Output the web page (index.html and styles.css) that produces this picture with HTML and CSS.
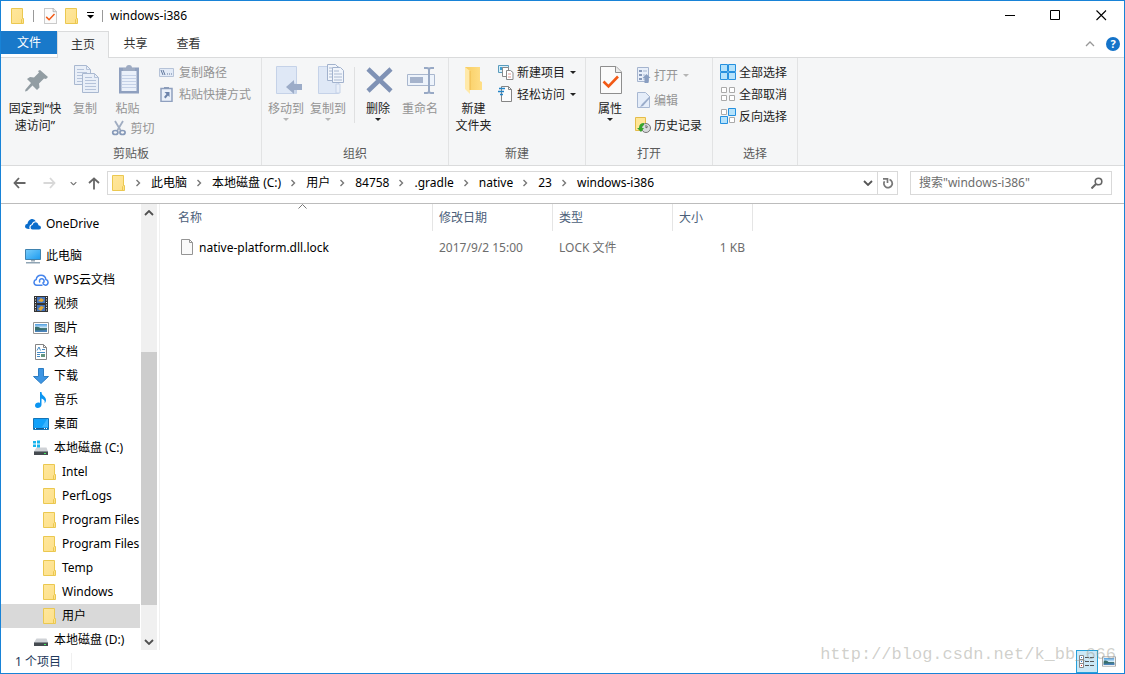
FILE: index.html
```html
<!DOCTYPE html>
<html lang="zh-CN">
<head>
<meta charset="utf-8">
<title>windows-i386</title>
<link rel="stylesheet" href="styles.css">
</head>
<body>
<svg class="defs" aria-hidden="true">
  <linearGradient id="gold" x2="1" y2="1"><stop stop-color="#ffe79c"/><stop offset="1" stop-color="#fde08a"/></linearGradient>
  <linearGradient id="fold" x2="1"><stop stop-color="#f8cd62"/><stop offset="1" stop-color="#ffdf88"/></linearGradient>
  <linearGradient id="screen" x2="1" y2="1"><stop stop-color="#79cdfb"/><stop offset="1" stop-color="#1b9af0"/></linearGradient>
  <linearGradient id="sky" y2="1" x2="0"><stop stop-color="#4d9de0"/><stop offset=".5" stop-color="#d6ecf8"/><stop offset=".55" stop-color="#4a7a74"/><stop offset="1" stop-color="#3b6fa5"/></linearGradient>
  <symbol id="folder" viewBox="0 0 14 16"><path d="M.5.5h11v10h1v5H.5z" fill="url(#gold)" stroke="#ebc850"/><path d="M11.500 10.500l-1 1v4" fill="none" stroke="#ebc850"/></symbol>
  <symbol id="page" viewBox="0 0 12 16"><path d="M.5.5h8l3 3v12H.5z" fill="#fafafa" stroke="#949494"/><path d="M8.500.5v3h3" fill="none" stroke="#949494"/></symbol>
  <symbol id="props" viewBox="0 0 22 28"><path d="M.5.5h15.500l5.500 5.500v21.500H.5z" fill="#fbfbfb" stroke="#8e8e8e"/><path d="M15.500.5v6h6" fill="#ececec" stroke="#8e8e8e"/><path d="M3.500 15.500l5 5L18 10.500" fill="none" stroke="#f25a16" stroke-width="2.600"/></symbol>
  <symbol id="picture" viewBox="0 0 16 12"><path d="M.5.5h15v11H.5z" fill="#fff" stroke="#969696"/><path d="M2 2h12v8H2z" fill="url(#sky)"/><path d="M2 5q4-1 6 2l6 1v1H2z" fill="#386e6c"/><path d="M2 8.500l12-.5v2H2z" fill="#4a83ba"/></symbol>
  <symbol id="chev" viewBox="0 0 6 8"><path d="M1.500 1l3 3-3 3" fill="none" stroke="#777" stroke-width="1.400"/></symbol>
  <symbol id="down" viewBox="0 0 10 6"><path d="M1 1l4 4 4-4" fill="none" stroke="currentColor" stroke-width="1.800"/></symbol>
  <symbol id="tri" viewBox="0 0 6 3"><path d="M0 0h6L3 3z" fill="currentColor"/></symbol>
  <symbol id="disk" viewBox="0 0 16 14"><path d="M3.500 5.500h10l1.500 4H1z" fill="#cfd2d6"/><path d="M1 9h14v4H1z" fill="#454b50"/><path d="M1 9h14v1H1z" fill="#858a90"/><path d="M11 11h2v1h-2z" fill="#44f060"/></symbol>
</svg>

<div class="window">
  <header class="titlebar">
    <div class="quick">
      <svg width="14" height="16"><use href="#folder"/></svg>
      <span class="bar"></span>
      <button aria-label="属性"><svg width="13" height="16" viewBox="0 0 22 28"><use href="#props"/></svg></button>
      <button aria-label="新建文件夹"><svg width="14" height="16"><use href="#folder"/></svg></button>
      <button aria-label="自定义快速访问工具栏"><svg width="7" height="7" viewBox="0 0 7 7"><path d="M0 0h7v1H0zM0 3h7L3.500 6.500z"/></svg></button>
      <span class="bar"></span>
    </div>
    <h1>windows-i386</h1>
    <div class="caption">
      <button aria-label="最小化"><svg width="11" height="11" viewBox="0 0 11 11"><path d="M1 5.500h10" stroke="#000"/></svg></button>
      <button aria-label="最大化"><svg width="11" height="11" viewBox="0 0 11 11"><path d="M.5.5h9v9h-9z" fill="none" stroke="#000"/></svg></button>
      <button aria-label="关闭"><svg width="11" height="11" viewBox="0 0 11 11"><path d="M.5.5l9.500 9.500M10 .5L.5 10" stroke="#000" stroke-width="1.100"/></svg></button>
    </div>
  </header>

  <nav class="tabs">
    <button class="tab file">文件</button>
    <button class="tab active">主页</button>
    <button class="tab">共享</button>
    <button class="tab">查看</button>
    <div class="tab-tools">
      <button aria-label="最小化功能区"><svg width="10" height="6" viewBox="0 0 10 6"><path d="M1 5l4-4 4 4" fill="none" stroke="#989898" stroke-width="1.300"/></svg></button>
      <button class="help" aria-label="帮助">?</button>
    </div>
  </nav>

  <section class="ribbon">
    <div class="group clipboard">
      <div class="tools">
        <button class="big pin"><svg width="32" height="32" viewBox="-1 -1 32 32"><path d="M20 5l8 7-2 2-2-.5-5 5 .5 4-2.500 2.500-4.500-4.500L7 26l-2 .5.5-2L11 18l-4-4 3-2 4 .5 5-5L18 6z" fill="#929da3"/></svg><span>固定到“快<br>速访问”</span></button>
        <button class="big copy off"><svg width="32" height="32" viewBox="-1 0 32 32"><g fill="#e9eff8" stroke="#a9b8d0"><path d="M4.500 1.500h12l4 4v15h-16z"/><path d="M12.500 9.500h12l4 4v15h-16z"/></g><path d="M16.500 1.500v4h4M24.500 9.500v4h4M7 5.500h7m-7 3h10m-10 3h5m-5 3h5m-5 3h5m3-4h7m-7 3h11m-11 3h11m-11 3h11m-11 3h11" fill="none" stroke="#b5c3da"/></svg><span>复制</span></button>
        <div class="paste">
          <button class="big off"><svg width="32" height="32" viewBox="-1 0 32 32"><path d="M6 3.500h20v26H6z" fill="#8fa0bf"/><path d="M8.500 7h15v20h-15z" fill="#eaf0fa"/><path d="M10 4h3q0-3 3-3t3 3h3v3H10z" fill="#9eabc2"/><path d="M9 11.500h14m-14 3h14m-14 3h14m-14 3h14m-14 3h14" stroke="#c5d1e7"/></svg><span>粘贴</span></button>
          <button class="small off"><svg width="16" height="16" viewBox="0 0 16 16"><path d="M4 1l6 10M12 1L6 11" stroke="#a0adc2" stroke-width="1.800"/><ellipse cx="4.300" cy="12.500" rx="2.600" ry="2" fill="none" stroke="#879ab9" stroke-width="1.700"/><ellipse cx="11.500" cy="12.500" rx="2.600" ry="2" fill="none" stroke="#879ab9" stroke-width="1.700"/></svg>剪切</button>
        </div>
        <div class="stack">
          <button class="small off"><svg width="16" height="16" viewBox="0 0 16 16"><path d="M.5 4.500h14v8H.5z" fill="#e3ebf7" stroke="#b6c3d8"/><path d="M2 6l2 5m0-5l2 5m2-1h1m1 0h1m1 0h1" stroke="#62789d"/></svg>复制路径</button>
          <button class="small off"><svg width="16" height="16" viewBox="0 0 16 16"><path d="M2 2.500h11v13H2z" fill="#eaf0fa" stroke="#8fa0bf" stroke-width="1.500"/><path d="M5 1h5v2H5z" fill="#8b9cb9"/><path d="M5.500 6h5v5L9 9.500 6.500 12.500 5 11l2.500-3z" fill="#6c83ab"/></svg>粘贴快捷方式</button>
        </div>
      </div>
      <h2>剪贴板</h2>
    </div>

    <div class="group organize">
      <div class="tools">
        <button class="big off"><svg width="32" height="32" viewBox="-2 0 32 32"><path d="M4.500 2.500h20v27h-20z" fill="#dfe8f6" stroke="#c5d2e8"/><path d="M21 17l3 3v10h-3z" fill="#c9d6ea"/><path d="M14 23l8-7v4h8v6h-8v4z" fill="#9cacc8"/></svg><span>移动到</span><svg class="tri" width="6" height="3"><use href="#tri"/></svg></button>
        <button class="big off"><svg width="32" height="32" viewBox="-2 0 32 32"><path d="M4.500 2.500h20v27h-20z" fill="#dfe8f6" stroke="#c5d2e8"/><path d="M22 20h4v9h-4z" fill="#e9eff9" stroke="#c5d2e8"/><g fill="#f1f5fb" stroke="#a2b2cd"><path d="M13.500.5h8l3 3v13h-11z"/><path d="M18.500 3.500h8l3 3v12h-11z"/></g><path d="M15 4h3m-3 3h3m-3 3h3m-3 3h3m2-6h5m-5 3h8m-8 3h8m-8 3h8" stroke="#aab9d1"/></svg><span>复制到</span><svg class="tri" width="6" height="3"><use href="#tri"/></svg></button>
        <span class="divider"></span>
        <button class="big"><svg width="32" height="32" viewBox="-1 0 32 32"><path d="M5 5l23 22M28 5L5 27" stroke="#7f92b5" stroke-width="4.500"/></svg><span>删除</span><svg class="tri" width="6" height="3"><use href="#tri"/></svg></button>
        <button class="big off"><svg width="32" height="32" viewBox="-1 0 32 32"><path d="M2.500 10.500h27v11h-27z" fill="#edf3fb" stroke="#a9b7ce"/><path d="M5 13h13v6H5z" fill="#a5b3cc"/><path d="M19 4h3q2 0 2 2 0-2 2-2h3M24 5v22m-5 2h3q2 0 2-2 0 2 2 2h3" fill="none" stroke="#98a9c5" stroke-width="2"/></svg><span>重命名</span></button>
      </div>
      <h2>组织</h2>
    </div>

    <div class="group new">
      <div class="tools">
        <button class="big"><svg width="32" height="32" viewBox="0 0 32 32"><path d="M7 3h15v14l2 1v8H11z" fill="url(#fold)"/><path d="M7 3l5 4v23l-5-5z" fill="#ffe9a9"/><path d="M12 7v19" stroke="#edb94c"/></svg><span>新建<br>文件夹</span></button>
        <div class="stack">
          <button class="small"><svg width="16" height="16" viewBox="0 0 16 16"><path d="M.5 1.500h10v7H.5z" fill="#d8effa" stroke="#5a9cbd"/><path d="M2 3h5v3H2z" fill="#3da0d3"/><g fill="#fff" stroke="#898989"><path d="M4.500 3.500h6v9h-6z"/><path d="M8.500 6.500h4l2.500 2v7h-6.500z"/></g><path d="M10 10h3m-3 3h3" stroke="#e2988f"/></svg>新建项目<svg class="tri" width="6" height="3"><use href="#tri"/></svg></button>
          <button class="small"><svg width="16" height="16" viewBox="0 0 16 16"><path d="M3.500.5h7l3 3v12h-10z" fill="#fcfcfc" stroke="#858585"/><path d="M10.500.5v3h3" fill="none" stroke="#858585"/><path d="M1 2.500h6M0 5.500h6M2 8.500h3" stroke="#2384c7" stroke-width="1.300"/></svg>轻松访问<svg class="tri" width="6" height="3"><use href="#tri"/></svg></button>
        </div>
      </div>
      <h2>新建</h2>
    </div>

    <div class="group open">
      <div class="tools">
        <button class="big"><svg width="32" height="32" viewBox="0 0 32 32"><svg x="6" y="2" width="22" height="28"><use href="#props"/></svg></svg><span>属性</span><svg class="tri" width="6" height="3"><use href="#tri"/></svg></button>
        <div class="stack roomy">
          <button class="small off"><svg width="16" height="16" viewBox="-1 0 16 16"><path d="M1.500.5h11v14h-11z" fill="#e8effa" stroke="#a5b4ce"/><path d="M3 3h3v2H3zm0 4h3v2H3zm0 4h3v2H3z" fill="#8799b9"/><path d="M7 4h4M7 8h2M7 12h2" stroke="#a9b8d1"/><path d="M10.500 7l4 4h-2v5h-4v-5h-2z" fill="#899ec1"/></svg>打开<svg class="tri" width="6" height="3"><use href="#tri"/></svg></button>
          <button class="small off"><svg width="16" height="16" viewBox="-1 0 16 16"><path d="M1.500.5h8l4 4v11h-12z" fill="#e5edf9" stroke="#a8b8d2"/><path d="M14 4l-8 8-2 3 3-1 7-8z" fill="#9aacca"/></svg>编辑</button>
          <button class="small"><svg width="16" height="16" viewBox="0 0 16 16"><path d="M.5.5h10v13H.5z" fill="#ffe697" stroke="#e4bc4b"/><circle cx="11" cy="11" r="4.500" fill="#d7dadc" stroke="#777"/><path d="M11 11V8m0 3l2-1.500" stroke="#666"/><path d="M9 6Q4 6 4 11H2l4 4 3-4H7q0-2 2-3z" fill="#36a52c"/></svg>历史记录</button>
        </div>
      </div>
      <h2>打开</h2>
    </div>

    <div class="group select">
      <div class="tools">
        <div class="stack">
          <button class="small"><svg width="16" height="16" viewBox="0 0 16 16"><g fill="#b5e2fb" stroke="#2590df"><path d="M.5.5h7v7h-7zM8.500.5h7v7h-7zM.5 8.500h7v7h-7zM8.500 8.500h7v7h-7z"/></g></svg>全部选择</button>
          <button class="small"><svg width="16" height="16" viewBox="0 0 16 16"><g fill="#fff" stroke="#aaa"><path d="M1.500 1.500h5v5h-5zM9.500 1.500h5v5h-5zM1.500 9.500h5v5h-5zM9.500 9.500h5v5h-5z"/></g></svg>全部取消</button>
          <button class="small"><svg width="16" height="16" viewBox="0 0 16 16"><path d="M1.500 1.500h5v5h-5zM9.500 9.500h5v5h-5z" fill="#fff" stroke="#aaa"/><path d="M8.500.5h7v7h-7zM.5 8.500h7v7h-7z" fill="#b5e2fb" stroke="#2590df"/></svg>反向选择</button>
        </div>
      </div>
      <h2>选择</h2>
    </div>
  </section>

  <div class="location">
    <div class="history">
      <button aria-label="后退"><svg width="13" height="12" viewBox="0 0 13 12"><path d="M6 1L1.500 6 6 11M1.500 6H12.500" fill="none" stroke="#666" stroke-width="1.800"/></svg></button>
      <button aria-label="前进"><svg width="13" height="12" viewBox="0 0 13 12"><path d="M7 1l4.500 5L7 11M11.500 6H.5" fill="none" stroke="#d8d8d8" stroke-width="1.800"/></svg></button>
      <button class="recent" aria-label="最近浏览的位置"><svg width="7" height="5" viewBox="0 0 10 6"><use href="#down"/></svg></button>
      <button class="up" aria-label="上移"><svg width="12" height="13" viewBox="0 0 12 13"><path d="M1 6l5-4.500L11 6M6 1.500V12.500" fill="none" stroke="#666" stroke-width="1.800"/></svg></button>
    </div>
    <div class="address">
      <svg width="14" height="16"><use href="#folder"/></svg>
      <svg class="chev" width="6" height="8"><use href="#chev"/></svg><button>此电脑</button>
      <svg class="chev" width="6" height="8"><use href="#chev"/></svg><button>本地磁盘 (C:)</button>
      <svg class="chev" width="6" height="8"><use href="#chev"/></svg><button>用户</button>
      <svg class="chev" width="6" height="8"><use href="#chev"/></svg><button>84758</button>
      <svg class="chev" width="6" height="8"><use href="#chev"/></svg><button>.gradle</button>
      <svg class="chev" width="6" height="8"><use href="#chev"/></svg><button>native</button>
      <svg class="chev" width="6" height="8"><use href="#chev"/></svg><button>23</button>
      <svg class="chev" width="6" height="8"><use href="#chev"/></svg><button>windows-i386</button>
      <button class="drop" aria-label="以前的位置"><svg width="10" height="6"><use href="#down"/></svg></button>
      <button class="refresh" aria-label="刷新"><svg width="12" height="12" viewBox="0 0 12 12"><path d="M7.500 2.500A4.200 4.200 0 1 1 2.500 4.200M1 1.800h4.500V6" fill="none" stroke="#777" stroke-width="1.700"/></svg></button>
    </div>
    <label class="search">
      <input type="text" placeholder='搜索"windows-i386"' aria-label="搜索">
      <svg width="12" height="12" viewBox="0 0 12 12"><circle cx="7.500" cy="4.500" r="3.300" fill="none" stroke="#666" stroke-width="1.600"/><path d="M5 7l-4.500 4.500" stroke="#666" stroke-width="2"/></svg>
    </label>
  </div>

  <div class="body">
    <nav class="tree">
      <a href="#" class="root"><svg width="16" height="16" viewBox="0 0 16 16"><path d="M4 13Q0 13 0 10.300 0 8 2.500 7.800 3 4 6.500 3q3-.5 4.500 2.500L9 9l-4 4z" fill="#0a6ccb"/><path d="M7 14Q4.300 14 4.300 11.200q0-2.500 2.400-3Q7.500 5.300 10.500 5.300q2.900 0 3.600 3Q16.500 8.800 16.500 11v3z" fill="#fff"/><path d="M7.500 13.500Q5.500 13.500 5.500 11.200 5.500 9.300 7.500 9 8.200 6.300 10.500 6.300q2.400 0 3 3 2.500.2 2.500 2.200 0 2-2 2z" fill="#0a6ccb"/></svg>OneDrive</a>
      <a href="#" class="root"><svg width="16" height="16" viewBox="0 0 16 16"><path d="M.5 1.500h15v10H.5z" fill="url(#screen)" stroke="#3f82af"/><path d="M6 12h4v1.500H6z" fill="#9eacb7"/><path d="M1 14h14v1.500H1z" fill="#8fa4b4"/></svg>此电脑</a>
      <a href="#"><svg width="16" height="16" viewBox="0 0 16 16"><path d="M9.500 13.200H3.700a2.900 2.900 0 0 1-.5-5.700 4.900 4.900 0 0 1 9.700 0 2.900 2.900 0 0 1-.5 5.700q-1.900 0-2.400-2.200A2.300 2.300 0 1 0 7 10.500" fill="none" stroke="#4484ec" stroke-width="1.500"/></svg>WPS云文档</a>
      <a href="#"><svg width="16" height="16" viewBox="0 0 16 16"><path d="M1 0h14v16H1z" fill="#343434"/><path d="M4 1h8v6H4zm0 8h8v6H4z" fill="#4374bd"/><path d="M5 5l3-3 3 2-2 2zM5 13l3-3 3 1-3 4z" fill="#e3a735"/><path d="M2.500 1v14M13.500 1v14" stroke="#eee" stroke-dasharray="1 1.500"/></svg>视频</a>
      <a href="#"><svg width="16" height="12"><use href="#picture"/></svg>图片</a>
      <a href="#"><svg width="16" height="16" viewBox="0 0 16 16"><path d="M2.500.5h8l3 3v12h-11z" fill="#fff" stroke="#858585"/><path d="M10.500.5v3h3" fill="none" stroke="#858585"/><path d="M4 6.500L6 3l1.500 3.500M9 5.500h3M4 8.500h8M4 10.500h3m-3 2h3" fill="none" stroke="#478cc5"/><path d="M8 10h4v3H8z" fill="#64957e"/></svg>文档</a>
      <a href="#"><svg width="16" height="16" viewBox="0 0 16 16"><path d="M5.500.5h5v8h5L8 15.500.5 8.500h5z" fill="#3d95e3" stroke="#2c7dc3"/></svg>下载</a>
      <a href="#"><svg width="16" height="16" viewBox="0 0 16 16"><path d="M7 0h1.500c0 4 4.500 4 4.500 8 0 2-1 3-1.500 3.500C12.500 8 10 7 8.500 6.500v6c0 2-1.500 3.500-4 3.500C3 16 2 15 2 13.500 2 11 5 10 7 11z" fill="#0c95f1"/></svg>音乐</a>
      <a href="#"><svg width="16" height="16" viewBox="0 0 16 16"><path d="M.5 2.500h15v11H.5z" fill="#10a1fa" stroke="#1474b7"/><path d="M9 11L14 3h1v8z" fill="#3bb5ff"/><path d="M1 12h14v1H1z" fill="#135b93"/><path d="M2 12.500h1m8 0h3" stroke="#fff" stroke-dasharray="1 1"/></svg>桌面</a>
      <a href="#"><svg width="16" height="16" viewBox="0 0 16 16"><svg y="2" width="16" height="14"><use href="#disk"/></svg><path d="M0 1h3v2.500H0zm4-.5h3v3H4zM0 4.500h3V7H0zm4 0h3v3H4z" fill="#18b3ec"/></svg>本地磁盘 (C:)</a>
      <a href="#" class="sub"><svg width="14" height="16"><use href="#folder"/></svg>Intel</a>
      <a href="#" class="sub"><svg width="14" height="16"><use href="#folder"/></svg>PerfLogs</a>
      <a href="#" class="sub"><svg width="14" height="16"><use href="#folder"/></svg>Program Files</a>
      <a href="#" class="sub"><svg width="14" height="16"><use href="#folder"/></svg>Program Files</a>
      <a href="#" class="sub"><svg width="14" height="16"><use href="#folder"/></svg>Temp</a>
      <a href="#" class="sub"><svg width="14" height="16"><use href="#folder"/></svg>Windows</a>
      <a href="#" class="sub current"><svg width="14" height="16"><use href="#folder"/></svg>用户</a>
      <a href="#"><svg width="16" height="14"><use href="#disk"/></svg>本地磁盘 (D:)</a>
    </nav>
    <div class="scrollbar">
      <button aria-label="向上滚动"><svg class="flip" width="10" height="6"><use href="#down"/></svg></button>
      <div class="track"><div class="thumb"></div></div>
      <button aria-label="向下滚动"><svg width="10" height="6"><use href="#down"/></svg></button>
    </div>
    <main class="files">
      <table>
        <colgroup><col class="c-name"><col class="c-mid"><col class="c-mid"><col class="c-size"></colgroup>
        <thead><tr><th class="sorted">名称<svg class="sort" width="9" height="5" viewBox="0 0 9 5"><path d="M.5 4.500l4-4 4 4" fill="none" stroke="#777"/></svg></th><th>修改日期</th><th>类型</th><th>大小</th></tr></thead>
        <tbody><tr><td><span class="file-name"><svg width="12" height="16"><use href="#page"/></svg>native-platform.dll.lock</span></td><td>2017/9/2 15:00</td><td>LOCK 文件</td><td class="size">1 KB</td></tr></tbody>
      </table>
    </main>
  </div>

  <footer class="status">
    <span class="count">1 个项目</span>
    <div class="views">
      <button class="on" aria-label="详细信息"><svg width="16" height="14" viewBox="0 0 16 14"><path d="M.5.5h4v12h-4zM.5 4.500h4m-4 4h4" fill="#fff" stroke="#888"/><path d="M6 2.500h4m1 0h4M6 6.500h4m1 0h4M6 10.500h4m1 0h4" stroke="#555"/><path d="M2 2h1v1H2zm0 4h1v1H2z" fill="#2b7bd0"/><path d="M2 10h1v1H2z" fill="#d33"/></svg></button>
      <button aria-label="大图标"><svg width="14" height="11" viewBox="0 0 16 12"><use href="#picture"/></svg></button>
    </div>
    <span class="watermark">http://blog.csdn.net/k_bb_666</span>
  </footer>
</div>
</body>
</html>
```
FILE: styles.css
```css
* { box-sizing: border-box; }

body {
  margin: 0;
  font: 12px/17px "Noto Sans", "Noto Sans CJK SC", sans-serif;
  color: #000;
}

button {
  display: flex;
  align-items: center;
  justify-content: center;
  padding: 0;
  border: 0;
  background: none;
  font: inherit;
  color: inherit;
  white-space: nowrap;
}

svg { display: block; flex: none; }
.defs { position: absolute; width: 0; height: 0; }

.window {
  position: relative;
  display: flex;
  flex-direction: column;
  height: 100vh;
  border: 1px solid #1883d7;
  background: #fff;
  overflow: hidden;
}

/* Title bar */
.titlebar { display: flex; flex: none; height: 30px; }
.quick { display: flex; align-items: center; gap: 8px; padding: 0 0 1px 10px; }
.bar { width: 1px; height: 12px; background: #999; }
.quick .bar { margin-right: 2px; }
.quick .bar:last-child { margin: 0; }
h1 { margin: 0; padding-left: 7px; font-size: 12px; font-weight: 400; line-height: 29px; }
.caption { display: flex; margin-left: auto; padding-bottom: 1px; }
.caption button { width: 46px; }

/* Tabs */
.tabs { display: flex; flex: none; height: 27px; border-bottom: 1px solid #dadbdc; }
.tab { width: 53px; height: 25px; color: #333; }
.tab.file { width: 56px; height: 23px; background: #1979ca; color: #fff; }
.tab.active { width: 52px; height: 27px; padding-bottom: 2px; border: 1px solid #dadbdc; border-bottom: 0; background: #f5f6f7; }
.tab-tools { display: flex; align-items: center; gap: 11px; margin-left: auto; padding-right: 4px; }
.help { width: 14px; height: 14px; border-radius: 7px; background: #1473c9; color: #fff; font-weight: 700; font-size: 11px; line-height: 14px; }

/* Ribbon */
.ribbon { display: flex; flex: none; height: 108px; background: #f5f6f7; border-bottom: 1px solid #dadbdc; color: #222; }
.group { display: flex; flex-direction: column; justify-content: space-between; padding: 3px 0; border-right: 1px solid #e2e3e4; }
.group h2 { margin: 0; font-size: 12px; font-weight: 400; text-align: center; color: #5a5a5a; }
.tools { display: flex; align-items: flex-start; }
.big { flex-direction: column; width: 42px; padding-top: 3px; }
.big > span { padding-top: 4px; }
.big .tri { margin-top: 1px; }
.off { color: #949494; }
.off .tri { color: #b5b5b5; }
.small { gap: 3px; height: 22px; }
.small .tri { margin-left: 2px; }
.stack { display: flex; flex-direction: column; align-items: flex-start; }
.clipboard { width: 261px; }
.clipboard .small { gap: 4px; }
.clipboard .stack { margin-left: 5px; }
.pin { width: 68px; }
.copy { width: 32px; }
.paste { display: flex; flex-direction: column; align-items: center; width: 53px; }
.paste .small { padding-left: 10px; }
.organize { width: 187px; }
.organize .tools { padding-left: 3px; }
.divider { align-self: center; width: 1px; height: 56px; margin: 6px 2px 0 5px; background: #dfe0e1; }
.new { width: 137px; }
.new .big { width: 49px; }
.open { width: 127px; }
.open .tools { gap: 4px; padding-left: 3px; }
.roomy { gap: 3px; padding-top: 3px; }
.select { width: 85px; }
.select .tools { padding-left: 7px; }

/* Location row */
.location { display: flex; flex: none; height: 38px; padding: 5px 12px 8px 0; border-bottom: 1px solid #bcbcbc; line-height: 16px; }
.history { display: flex; flex: none; align-items: center; width: 106px; padding-left: 12px; gap: 17px; }
.recent { color: #777; margin-right: -6px; margin-left: -3px; }
.address { display: flex; flex: 1; align-items: center; min-width: 0; height: 24px; padding-left: 4px; border: 1px solid #d9d9d9; }
.address > button { height: 20px; padding-bottom: 1px; }
.chev { margin: 0 10px 0 9px; }
.address .drop { width: 18px; margin-left: auto; color: #555; }
.address .refresh { width: 20px; height: 22px; border-left: 1px solid #d9d9d9; }
.search { display: flex; flex: none; align-items: center; width: 202px; height: 24px; margin-left: 12px; padding: 0 8px; border: 1px solid #d9d9d9; }
.search input { flex: 1; min-width: 0; padding: 0; border: 0; outline: 0; font: inherit; }
.search input::placeholder { color: #6d6d6d; opacity: 1; }

/* Body */
.body { display: flex; flex: 1; min-height: 0; }
.tree { flex: none; width: 139px; padding-top: 8px; overflow: hidden; line-height: 16px; }
.tree a { display: flex; align-items: center; gap: 5px; height: 24px; padding: 0 0 1px 32px; color: #000; text-decoration: none; white-space: nowrap; overflow: hidden; }
.tree .root { padding-left: 24px; }
.tree .root:nth-child(2) { margin-top: 8px; }
.tree .sub { padding-left: 42px; }
.tree .current { background: #d9d9d9; }
.scrollbar { display: flex; flex: none; flex-direction: column; width: 16px; margin-left: 1px; background: #f0f0f0; }
.scrollbar button { height: 17px; color: #505050; }
.flip { transform: scaleY(-1); }
.track { display: flex; flex: 1; flex-direction: column; justify-content: flex-end; padding-bottom: 28px; }
.thumb { height: 66%; background: #cdcdcd; }
.files { flex: 1; margin-left: 2px; border-left: 1px solid #f0f0f0; }
table { table-layout: fixed; width: 593px; border-collapse: separate; border-spacing: 0; color: #6d6d6d; }
.c-name { width: 273px; }
.c-mid { width: 120px; }
.c-size { width: 80px; }
th { position: relative; height: 27px; padding: 0 6px; border-right: 1px solid #e5e5e5; font-weight: 400; text-align: left; color: #4c607a; }
td { height: 32px; padding: 0 8px 0 6px; }
th:first-child { padding-left: 18px; }
td:first-child { padding-left: 21px; }
.sort { position: absolute; top: 0; left: 138px; }
.file-name { display: flex; align-items: center; gap: 6px; color: #000; }
.size { text-align: right; }

/* Status bar */
.status { display: flex; flex: none; align-items: center; height: 23px; color: #1e395b; }
.count { padding: 0 10px 0 14px; border-right: 1px solid #f0f0f0; }
.views { display: flex; align-items: center; gap: 4px; margin-left: auto; padding-right: 8px; }
.views .on { width: 22px; height: 23px; border: 1px solid #26a0da; background: #cbe8f6; }
.watermark { position: absolute; right: 8px; bottom: 7px; font: 17px/22px "Liberation Mono", monospace; color: rgba(150, 150, 140, 0.45); pointer-events: none; }
```
